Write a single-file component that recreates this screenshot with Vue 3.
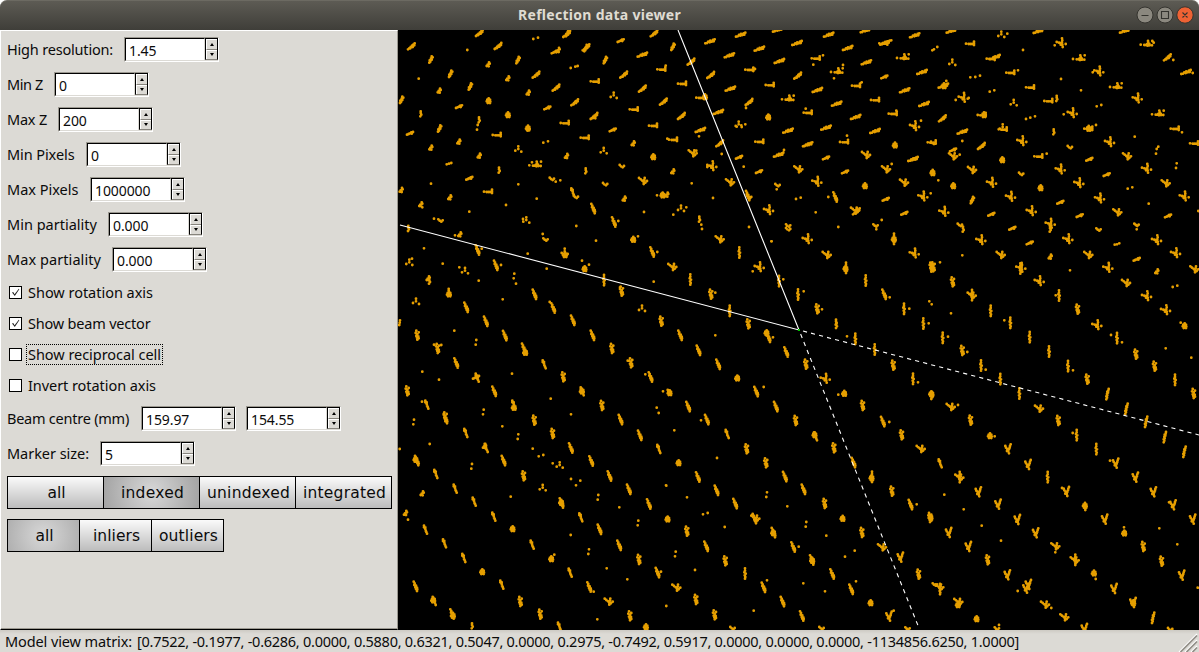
<script setup>
const fit = (el, width) => {
  const range = document.createRange()
  range.selectNodeContents(el)
  el.style.letterSpacing = '0px'
  const natural = range.getBoundingClientRect().width
  el.style.letterSpacing = (width - natural) / el.textContent.length + 'px'
}
const vFit = { mounted: (el, b) => fit(el, b.value) }

const spins = [
  { label: 'High resolution:', w: 106, box: 117, values: ['1.45'] },
  { label: 'Min Z', w: 36, box: 47, values: ['0'] },
  { label: 'Max Z', w: 40, box: 51, values: ['200'] },
  { label: 'Min Pixels', w: 67.5, box: 79, values: ['0'] },
  { label: 'Max Pixels', w: 71.5, box: 83, values: ['1000000'] },
  { label: 'Min partiality', w: 90, box: 101, values: ['0.000'] },
  { label: 'Max partiality', w: 94, box: 105, values: ['0.000'] },
]
const checks = [
  { label: 'Show rotation axis', w: 125, on: true },
  { label: 'Show beam vector', w: 122.5, on: true },
  { label: 'Show reciprocal cell', w: 133, on: false, focus: true },
  { label: 'Invert rotation axis', w: 128, on: false },
]
const lower = [
  { label: 'Beam centre (mm)', w: 122, box: 134, values: ['159.97', '154.55'] },
  { label: 'Marker size:', w: 82, box: 93, values: ['5'] },
]
const groups = [
  { cell: 96, items: [['all', 18], ['indexed', 63], ['unindexed', 83], ['integrated', 83]], active: 1 },
  { cell: 72, items: [['all', 18], ['inliers', 47], ['outliers', 59]], active: 0 },
]
const matrix = '[0.7522, -0.1977, -0.6286, 0.0000, 0.5880, 0.6321, 0.5047, 0.0000, 0.2975, -0.7492, 0.5917, 0.0000, 0.0000, 0.0000, -1134856.6250, 1.0000]'

// Marker clusters: each glyph is a list of dot offsets, in thirds of a pixel.
const glyphs = {
  d: '0,0',
  u: '1,-7 -1,7',
  p: '-7,2 7,-2',
  c: '3,-7 5,-3 -1,0 -4,4 2,5',
  q: '-7,-3 -3,1 2,4 6,0',
  C: '0,-8 -4,-4 4,-4 -6,1 0,0 5,2 -3,6 4,6',
  t: '0,-10 0,-2 -9,3 9,6',
  S: '3,-10 6,-7 1,-4 3,0 -3,2 -1,6 -4,9',
  L: '10,-9 6,-5 9,-3 2,-2 4,2 -2,2 -6,6 -10,9 -3,6',
  f: '9,-4 4,-3 5,1 0,0 -4,2 -9,4',
  F: '14,-6 9,-4 11,0 5,1 1,-2 -1,3 -5,1 -9,5 -14,6',
  h: '12,-5 12,0 12,5 6,2 1,2 -4,2 -12,1',
  k: '17,-9 16,4 4,-9 5,-4 8,0 2,0 9,4 3,5 -2,3 -7,3 -18,2',
  y: '3,-15 4,-9 3,-3 4,4 5,11 -1,4 0,-1 -6,-2 -13,-4 14,2',
  Y: '-12,-8 -7,-4 -2,0 5,-8 4,-2 7,6 2,5 2,10 12,1',
  g: '-8,-9 -6,-4 -2,0 8,-14 6,-9 5,-4 3,1 1,7 3,13 -3,6',
  V: '1,-16 1,-9 -1,-4 3,0 0,5 2,10 1,15',
  v: '0,-8 0,-3 2,2 -1,7',
  b: '-6,-14 -3,-9 -4,-4 1,-2 -1,3 4,4 1,8 5,9 4,14',
  B: '-5,-15 -4,-9 -2,-4 2,1 -1,5 4,9 2,13 12,0',
  w: '-4,-12 -4,-7 0,-7 0,-2 1,3 3,7 5,12',
  z: '5,-16 4,-11 1,-8 3,-5 0,-1 1,3 -2,6 0,10 -2,15',
  R: '-2,-14 5,-9 -4,-7 1,-3 -2,2 4,3 0,7 5,9 1,13',
}
const tiles = [
  [398, 28, `L40,55 L244,15 d208,66 L300,54 p413,31 L506,18 S508,16 L768,16 f668,38 f470,72 c480,67 L564,58 S563,61 S98,95 S359,97 c270,110 S621,97 F733,80 h790,123 d803,113 S157,138 c329,152 L414,140 p525,118 d539,114 L677,140 h590,159 d62,152 c123,189 S216,176 c390,195 L474,179 L733,182 t647,204 S10,216 v68,258 f183,236 C272,219 f448,240 d452,236 L530,223 h707,243 L796,221 C330,261 v243,276 u238,298 S124,302 v390,301 C390,301 h500,284 L588,264 d592,271 f644,306 h765,292 f36,316 h296,320 h560,328 c182,342 c98,360 p443,342 t361,365 c705,347 t617,370 c243,384 c505,385 C766,387 p153,407 d153,407 k412,410 d402,403 q672,414 v303,427 v563,429 f214,451 d99,467 c9,487 d361,469 q462,452 p480,459 q622,468 Y735,458 h270,490 c155,509 c68,530 d73,538 w524,493 q534,506 d416,512 c678,513 C794,502 d777,502 d214,551 d324,531 b586,542 d738,552 d108,572 q128,577 t385,578 d375,573 b648,582 d661,579 d535,594 d808,332`],
  [666, 28, `F224,20 F488,20 F746,22 F335,5 F598,7 S20,57 F132,40 F280,62 F393,45 F545,60 F657,44 d676,37 h652,45 d799,67 F190,82 L75,101 F340,99 d354,94 h449,90 d471,82 d442,110 F601,103 k711,88 L134,141 h250,124 d267,123 k513,130 d531,111 d504,151 L395,143 f655,147 F768,132 h48,166 F193,182 h311,170 F454,186 h570,172 d587,163 F716,187 h103,208 C117,207 F157,252 k366,212 L249,222 d240,240 F512,227 h627,215 F774,228 L46,264 F569,267 h425,253 d419,242 h680,256 d691,248 t218,291 p219,294 d238,289 C307,268 F366,308 F480,299 F103,306 d99,325 F627,309 y745,295 d765,278 h21,334 L161,346 F425,349 f424,350 h280,340 h534,341 d543,323 d167,378 Y80,375 d91,368 C687,352 h797,342 f219,388 d233,416 F338,380 d354,366 f480,390 Y600,380 F741,393 f742,394 y137,415 d124,417 c20,431 f279,431 Y397,423 f537,432 Y660,423 d677,408 C800,434 Y192,462 d77,466 q335,471 d332,484 y452,462 C597,474 Y714,463 c2,501 d141,510 b246,503 q250,507 p397,511 b508,507 d487,507 f659,514 y770,506 t45,543 d22,560 d61,538 y307,547 d449,553 Y567,547 L571,550 f715,556 v100,574 d106,590 q367,592 d517,597 q629,592 d647,576 d249,597`],
  [930, 28, `F64,8 F325,9 F584,8 d12,64 d22,57 t214,21 d232,17 h120,46 F195,87 h182,91 y393,46 d374,52 d279,66 k650,48 d671,44 k447,91 L712,88 d730,96 t67,105 h241,133 d264,127 p143,145 d121,148 y506,131 d488,133 F768,132 d788,135 F40,173 d49,159 C42,174 h300,177 k558,175 p186,189 d393,153 d453,187 y99,210 d77,216 d116,210 h355,218 v380,212 y621,212 t251,226 p507,233 h155,260 C162,261 L37,271 y426,256 d401,259 k684,257 d288,273 p308,267 F97,311 d97,339 t218,299 h218,303 v371,312 h475,301 C476,302 d498,291 h734,301 d756,313 q10,344 y275,340 L154,354 y538,343 q420,357 d614,326 h792,345 Y69,384 d89,380 f69,366 C217,396 h325,384 d350,377 Y591,384 f478,394 u679,370 d685,356 Y126,425 q274,437 y390,425 y649,423 u739,413 C8,435 d25,457 f530,440 C70,474 y184,465 C332,480 y446,466 p600,480 Y707,465 S126,517 y241,507 f391,523 y508,512 y762,506 d656,527 y41,552 f184,559 y303,550 f449,563 Y562,552 f714,564 q90,590 y360,588 q620,590 d2,496 d805,549 d253,599`],
  [398, 228, `v31,2 c185,20 d171,22 d434,18 q443,34 C706,35 d720,25 b763,72 d778,72 b239,66 d251,62 d78,61 d389,77 t500,72 C501,81 d594,38 d42,92 t34,105 b294,112 d309,111 t201,130 d184,118 d134,107 u348,144 d354,167 d242,158 c90,152 v94,160 C560,123 d552,98 d573,110 V617,157 d446,122 d767,161 C153,199 v152,191 b205,238 t54,222 d314,214 b410,199 b466,240 d455,222 R670,190 d666,178 t732,243 R789,280 b525,277 d5,284 u5,284 R57,322 b264,280 b321,323 b378,361 C382,374 b584,322 R641,362 R118,362 d108,350 d130,351 b175,405 d169,308 u234,343 w438,409 R698,405 d689,398 f234,448 w237,449 d73,431 d123,455 d342,437 R495,447 b758,447 d742,439 R27,489 b289,490 w552,490 C552,490 d458,512 d519,559 w86,530 d72,521 R141,567 b143,572 w347,530 C348,539 R408,577 R611,533 b668,575 u256,552 u47,582 d313,595 p802,488 d776,539 d782,555`],
  [666, 228, `Y161,33 V219,74 d316,40 q367,3 y423,34 d108,3 V683,33 C684,34 Y482,80 d631,4 d317,40 y279,118 d260,130 V539,120 C539,122 y744,77 R795,118 Y19,116 V72,155 V338,160 d352,154 R134,199 d148,194 V395,200 d413,190 R453,243 d468,244 V598,158 b655,199 d671,208 V713,243 d730,242 V771,287 d788,286 V190,249 R246,288 C302,315 b308,328 d321,328 v510,283 v511,293 V567,333 d543,325 V625,365 b43,322 b98,367 d148,322 b361,372 R419,409 R681,412 V740,453 d756,463 b157,409 C214,451 y477,453 C535,497 d517,500 C796,498 v797,506 b271,491 d293,477 b330,536 b67,536 b123,575 d105,577 C11,495 R388,578 R589,533 b651,581 d670,582 d790,220 d797,229`],
  [930, 228, `v99,4 f247,1 v360,4 q506,4 d620,4 y152,37 f299,45 y413,34 d561,49 p561,48 y679,37 Y212,80 d97,82 c360,87 Y475,80 y736,76 y272,120 V270,122 R9,117 d30,103 d420,127 y533,120 f620,94 c680,131 Y793,123 y327,160 R67,162 Y588,164 p735,175 Y125,202 V125,202 V386,203 d377,202 y649,205 V181,249 R442,244 y706,247 V240,285 d223,277 y500,292 C764,294 d752,284 d63,256 V298,328 V560,331 d543,321 d576,343 V37,330 d54,326 V356,371 R617,379 R96,368 d112,372 V413,415 d429,427 R673,415 d707,361 d784,389 V152,413 d167,425 V210,454 R471,454 V734,456 V267,497 z531,499 R790,497 C5,499 Y62,536 d84,531 Y327,541 z588,543 R121,577 R384,578 z647,582`],
  [398, 428, `w203,15 R463,17 b726,22 c259,55 w264,60 u360,26 d95,48 d5,63 b519,60 w782,63 C53,95 b57,98 b317,98 d404,62 p429,83 b580,99 d464,106 t485,113 u221,115 w113,138 R376,144 b635,144 w171,182 d519,153 d547,158 d534,172 t434,181 b693,184 u600,208 c72,197 w228,221 C490,224 b491,225 b753,228 d338,206 w287,266 d664,238 w548,268 c22,256 d30,275 w82,305 C344,303 u720,285 b605,304 w139,346 w402,350 d518,321 b664,352 C460,393 d469,380 w197,390 R722,395 u572,371 w516,434 C253,432 d626,421 b574,477 d587,491 b779,434 d789,431 w311,470 b53,475 d688,454 C106,517 w108,519 R366,521 Y632,520 b163,558 C165,563 R426,559 d598,574 R695,564 v222,594 w484,596 C744,597 d805,534 d804,172`],
  [666, 428, `d25,7 w183,18 C446,21 w448,25 R706,21 R241,63 R503,60 Y764,62 d153,90 C38,105 R299,105 b563,104 V617,147 C617,150 b96,147 b357,146 b413,184 R677,190 b152,187 d1,173 d63,208 u302,200 d364,235 R475,227 b208,227 b734,230 d752,229 p118,257 Y268,271 b266,272 C530,272 R791,269 u420,289 C5,274 R62,310 C322,315 b323,314 R587,314 d176,297 d481,323 b121,355 b382,357 d398,356 u28,378 Y648,357 R177,399 C439,398 b438,396 g703,388 d566,368 d537,386 d87,426 V236,437 b499,438 R757,439 Y31,478 b293,478 d303,457 b556,484 d570,460 d412,466 d477,490 R89,515 b350,521 C614,525 R145,561 b408,564 g669,565 d683,548 q200,600 q467,600 q725,601 d263,548 d1,534 q807,469`],
  [930, 428, `C180,24 d194,25 V439,22 d428,15 z703,28 g234,63 V498,64 z762,72 w30,106 Y88,148 V88,148 g294,110 g557,106 d540,98 g616,148 V352,148 g145,192 g409,191 d396,180 g670,192 g204,229 d43,200 C465,233 d466,246 g729,231 d717,223 d101,244 C2,269 g262,275 g524,274 g788,274 g56,314 d155,293 g317,315 C583,316 d582,298 d688,301 d213,338 g115,356 Y376,354 d376,373 R639,356 d742,349 R172,396 Y434,396 V435,396 R694,400 g232,441 C492,436 d497,453 g755,442 Y28,477 V29,484 g288,481 g295,470 d263,489 g552,482 d803,479 Y85,521 C84,531 Y345,529 d364,540 g609,524 C610,525 C140,573 Y403,567 z668,570 q201,601 d207,591 g463,602 q721,603`],
]
const markers = tiles.map(([ox, oy, text]) =>
  text.trim().split(/\s+/).map((item) => {
    const [x, y] = item.slice(1).split(',').map(Number)
    return glyphs[item[0]].split(' ').map((p) => {
      const [dx, dy] = p.split(',').map(Number)
      return `M${(ox - 398 + (x + dx) / 3).toFixed(1)} ${(oy - 30 + (y + dy) / 3).toFixed(1)}h.01`
    }).join('')
  }).join('')
).join('')
</script>

<template>
  <div class="window">
    <header class="titlebar">
      <span v-fit="163" class="title">Reflection data viewer</span>
      <svg class="controls" width="60" height="20" viewBox="0 0 60 20">
        <g stroke="#35342f">
          <circle cx="10" cy="10" r="8" fill="#8b887f" />
          <circle cx="30" cy="10" r="8" fill="#8b887f" />
          <circle cx="50" cy="10" r="8.2" fill="#ee6234" />
        </g>
        <g fill="none" stroke="#34332e" stroke-width="1.1">
          <path d="M6.5 10.5h7M26.5 6.5h7v7h-7zM47.5 7.5l5 5M52.5 7.5l-5 5" />
        </g>
      </svg>
    </header>
    <main class="body">
      <section class="panel">
        <div v-for="row in spins" :key="row.label" class="row">
          <div class="label" :style="{ width: row.box + 'px' }"><span v-fit="row.w">{{ row.label }}</span></div>
          <div v-for="v in row.values" :key="v" class="spin">
            <div class="field">{{ v }}</div>
            <div class="steps"><i class="up"></i><i class="down"></i></div>
          </div>
        </div>
        <div class="checks">
          <div v-for="c in checks" :key="c.label" class="check">
            <span class="tick">
              <svg v-if="c.on" width="11" height="11" viewBox="0 0 11 11"><path d="M2 5.5l1.2-.4 1.4 2.1L8.8 1.8l.5.5L4.8 9.1z" fill="#222" /></svg>
            </span>
            <span class="caption" :class="{ focus: c.focus }"><span v-fit="c.w">{{ c.label }}</span></span>
          </div>
        </div>
        <div v-for="row in lower" :key="row.label" class="row">
          <div class="label" :style="{ width: row.box + 'px' }"><span v-fit="row.w">{{ row.label }}</span></div>
          <div v-for="v in row.values" :key="v" class="spin">
            <div class="field">{{ v }}</div>
            <div class="steps"><i class="up"></i><i class="down"></i></div>
          </div>
        </div>
        <div v-for="(g, gi) in groups" :key="gi" class="group">
          <div v-for="(b, i) in g.items" :key="b[0]" class="segment" :class="{ active: i === g.active }" :style="{ width: g.cell + 'px' }">
            <span v-fit="b[1]">{{ b[0] }}</span>
          </div>
        </div>
      </section>
      <svg class="view" width="801" height="600" viewBox="0 0 801 600">
        <rect width="801" height="600" fill="#000" />
        <path :d="markers" stroke="#e69f00" stroke-width="2.8" stroke-linecap="round" />
        <g stroke="#fff" stroke-width="1.1" fill="none">
          <path d="M280 0L401 300L2 195" />
          <path d="M401 300L801 405" stroke-dasharray="4.14 4.14" stroke-dashoffset="4.14" />
          <path d="M401 300L521 598" stroke-dasharray="4.3 4.3" stroke-dashoffset="4.3" />
        </g>
        <rect x="400" y="299" width="2" height="2" fill="#0c0" />
      </svg>
    </main>
    <footer class="status">
      <div class="message">
        <span v-fit="127" class="name">Model view matrix:</span>
        <span v-fit="882">{{ matrix }}</span>
      </div>
      <svg class="grip" width="20" height="20" viewBox="0 0 20 20">
        <path d="M1 20L19 2M7 20L19 8M13 20L19 14" stroke="#fff" stroke-width="1.3" />
        <path d="M2.5 20L19 3.5M8.5 20L19 9.5M14.5 20L19 15.5" stroke="#928f88" stroke-width="1.7" />
      </svg>
    </footer>
  </div>
</template>

<style>
body { background: #fff; overflow: hidden; }
</style>

<style scoped>
.window { width: 1199px; height: 652px; display: flex; flex-direction: column; font: 14.5px/20px "Noto Sans", "Open Sans", sans-serif; color: #0b0b0b; background: #fff; white-space: pre; }
.window * { box-sizing: border-box; }
.titlebar { height: 30px; flex: none; display: grid; grid-template-columns: 80px 1fr 80px; align-items: center; background: linear-gradient(#5d5b54, #3f3e39); border-top: 1px solid #6c6a62; border-radius: 7px 7px 0 0; }
.title { grid-column: 2; justify-self: center; padding-bottom: 2px; font-size: 14px; font-weight: 700; color: #dfdbd2; }
.controls { margin: -1px 0 0 16px; }
.body { display: flex; height: 600px; flex: none; }
.panel { width: 398px; height: 600px; padding: 6px 0 0 6px; background: #dcdad5; border: 1px solid #fff; border-right-color: #9b9890; border-bottom: 1px solid #000; box-shadow: inset 0 -1px #9b9890; }
.row { display: flex; height: 25px; margin-bottom: 10px; align-items: center; }
.label { padding-bottom: 2px; }
.spin { width: 95px; height: 25px; display: flex; border: 1px solid #9b9890; border-right-color: #fff; border-bottom-color: #fff; margin-right: 10px; }
.field { width: 80px; height: 23px; padding-left: 3px; line-height: 23px; font-size: 14px; letter-spacing: -.1px; background: #fff; border: 1px solid #000; border-right-color: #dcdad5; border-bottom-color: #dcdad5; }
.steps { width: 13px; height: 22px; display: flex; flex-direction: column; border: 1px solid #000; border-bottom-color: #86837c; }
.steps i { flex: 1; display: flex; align-items: center; justify-content: center; border-top: 1px solid #fff; border-left: 1px solid #fff; }
.steps .up { border-bottom: 1px solid #86837c; }
.up::before, .down::before { content: ""; margin-right: 1px; border: 2.5px solid transparent; }
.up::before { border-top: 0; border-bottom: 3px solid #000; }
.down::before { border-bottom: 0; border-top: 3px solid #000; }
.checks { height: 124px; }
.check { display: flex; align-items: center; height: 21px; margin-bottom: 10px; padding-left: 2px; }
.tick { width: 13px; height: 13px; border: 1px solid #000; background: #fff; display: flex; }
.caption { height: 21px; padding: 0 1px; margin-left: 4px; line-height: 19px; border: 1px dotted transparent; margin-right: auto; }
.caption span { display: inline-block; }
.caption.focus { border-color: #000; }
.group { display: flex; width: max-content; height: 33px; margin-bottom: 10px; border-left: 1px solid #000; }
.segment { display: flex; align-items: center; justify-content: center; padding-left: 2px; border: 1px solid #000; border-left: 0; background: linear-gradient(#fafafa, #bcbcbc); font-family: "DejaVu Sans", sans-serif; font-size: 15.5px; }
.segment.active { background: radial-gradient(circle 48px, #d8d8d8, #a5a5a5); }
.view { display: block; }
.status { height: 22px; display: flex; justify-content: space-between; align-items: center; padding-left: 5px; background: linear-gradient(#cdcac3, #dcdad5 4px); }
.message { display: flex; line-height: 22px; }
.name { margin-right: 5px; }
.grip { margin: 2px 1px 0 0; }
</style>
